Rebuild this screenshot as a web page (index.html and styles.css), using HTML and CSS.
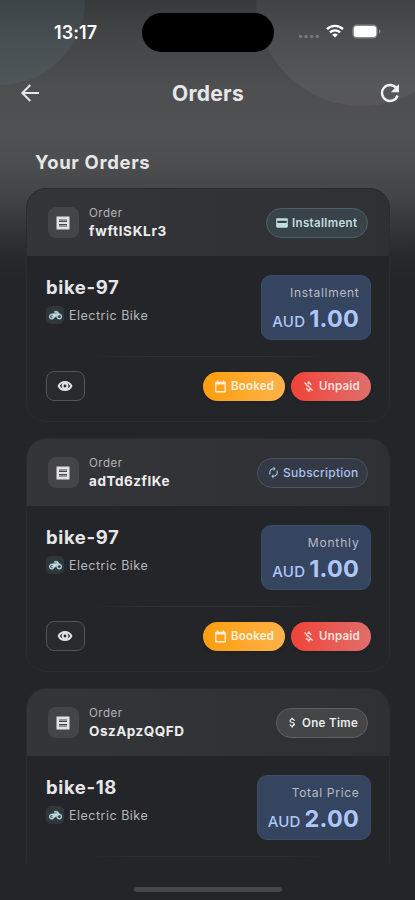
FILE: index.html
```html
<!DOCTYPE html>
<html lang="en">
<head>
<meta charset="utf-8">
<title>Orders</title>
<link rel="stylesheet" href="styles.css">
</head>
<body>
<svg width="0" height="0" class="defs" aria-hidden="true">
  <symbol id="receipt" viewBox="0 0 14 14"><path fill="currentColor" fill-rule="evenodd" d="M.5.5h13v13H.5zM3 3v3h8V3zM3 8v3h8V8z"/><path fill="currentColor" opacity=".5" d="M3 3h8v2H3zM3 9h8v2H3z"/></symbol>
  <symbol id="bike" viewBox="0 0 24 24"><path fill="currentColor" stroke="currentColor" stroke-width=".8" d="M19.440 9.030 15.410 4H10v2.500h4.200l1.500 1.800H9L5 9c-2.800 0-5 2.200-5 5s2.200 5 5 5c2.460 0 4.450-1.690 4.900-4h1.650l2.770-2.770c-.210.540-.320 1.140-.320 1.770 0 2.800 2.200 5 5 5s5-2.200 5-5c0-2.650-1.970-4.770-4.560-4.970M7.820 15C7.400 16.150 6.280 17 5 17c-1.630 0-3-1.370-3-3s1.370-3 3-3c1.280 0 2.400.850 2.820 2H5v2zM19 17c-1.660 0-3-1.340-3-3s1.340-3 3-3 3 1.340 3 3-1.340 3-3 3"/></symbol>
  <symbol id="eye" viewBox="0 0 24 24"><path fill="none" stroke="currentColor" stroke-width="3" d="M2.500 12C4.500 7.800 8 6 12 6s7.500 1.800 9.500 6c-2 4.200-5.500 6-9.500 6S4.500 16.200 2.500 12z"/><circle cx="12" cy="12" r="3.600" fill="none" stroke="currentColor" stroke-width="3"/></symbol>
  <symbol id="calendar" viewBox="0 0 24 24"><path fill="currentColor" d="M20 3h-1V1h-3v2H8V1H5v2H4c-1.100 0-2 .900-2 2v16c0 1.100.900 2 2 2h16c1.100 0 2-.900 2-2V5c0-1.100-.900-2-2-2m-.500 17.500h-15V8.500h15z"/></symbol>
  <symbol id="moneyoff" viewBox="0 0 24 24"><path fill="currentColor" stroke="currentColor" stroke-width=".7" d="M12.500 6.900c1.780 0 2.440.850 2.500 2.100h2.210c-.070-1.720-1.120-3.300-3.210-3.810V3h-3v2.160c-.530.120-1.030.300-1.480.540l1.470 1.470c.410-.170.910-.270 1.510-.270M5.330 4.060 4.060 5.330 7.500 8.770c0 2.080 1.560 3.210 3.910 3.910l3.510 3.510c-.340.480-1.050.910-2.420.910-2.060 0-2.870-.920-2.980-2.100h-2.200c.120 2.190 1.760 3.420 3.680 3.830V21h3v-2.150c.960-.180 1.820-.550 2.450-1.120l2.220 2.220 1.270-1.270z"/></symbol>
  <symbol id="card" viewBox="0 0 24 24"><path fill="currentColor" d="M20 4H4c-1.110 0-2 .890-2 2v12c0 1.110.890 2 2 2h16c1.110 0 2-.890 2-2V6c0-1.110-.890-2-2-2m0 8H4V8h16z"/></symbol>
  <symbol id="renew" viewBox="0 0 24 24"><path fill="currentColor" d="M12 6v3l4-4-4-4v3c-4.420 0-8 3.580-8 8 0 1.570.460 3.030 1.240 4.260L6.700 14.800c-.450-.830-.700-1.790-.700-2.800 0-3.310 2.690-6 6-6m6.760 1.740L17.300 9.200c.440.840.700 1.790.700 2.800 0 3.310-2.690 6-6 6v-3l-4 4 4 4v-3c4.420 0 8-3.580 8-8 0-1.570-.460-3.030-1.240-4.260"/></symbol>
  <symbol id="dollar" viewBox="0 0 24 24"><path fill="currentColor" d="M11.800 10.900c-2.270-.590-3-1.200-3-2.150 0-1.090 1.010-1.850 2.700-1.850 1.780 0 2.440.850 2.500 2.100h2.210c-.070-1.720-1.120-3.300-3.210-3.810V3h-3v2.160c-1.940.420-3.500 1.680-3.500 3.610 0 2.310 1.910 3.460 4.700 4.130 2.500.600 3 1.480 3 2.410 0 .690-.490 1.790-2.700 1.790-2.060 0-2.870-.920-2.980-2.100h-2.200c.120 2.190 1.760 3.420 3.680 3.830V21h3v-2.150c1.950-.370 3.500-1.500 3.500-3.550 0-2.840-2.430-3.810-4.700-4.400"/></symbol>
</svg>
<div class="screen">
  <div class="blob blob-left"></div>
  <div class="blob blob-right"></div>
  <div class="status">
    <span class="time">13:17</span>
    <span class="island"></span>
    <span class="signals">
      <svg width="22" height="5" viewBox="0 0 22 5" fill="#77787a"><circle cx="2.500" cy="2.500" r="1.800"/><circle cx="8.100" cy="2.500" r="1.800"/><circle cx="13.700" cy="2.500" r="1.800"/><circle cx="19.300" cy="2.500" r="1.800"/></svg>
      <svg class="wifi" width="18" height="14" viewBox="0 0 18 14"><g fill="none" stroke="#fff" stroke-width="2.400"><path d="M1 5.200a11.400 11.400 0 0 1 16 0"/><path d="M4 8.400a7.100 7.100 0 0 1 10 0"/></g><path fill="#fff" d="M9 13.600 6.200 10.800a4 4 0 0 1 5.600 0z"/></svg>
      <svg class="battery" width="29" height="15" viewBox="0 0 29 15"><rect x=".5" y=".5" width="25" height="14" rx="4.500" fill="#858688"/><rect x="1.800" y="2" width="22.500" height="11" rx="3.200" fill="#fff"/><path d="M27 5.200c2 .6 2 4 0 4.600z" fill="#858688"/></svg>
    </span>
  </div>
  <header class="bar">
    <svg width="20" height="20" viewBox="0 0 20 20" fill="none" stroke="#e6e6e8" stroke-width="2"><path d="M19 10H2.500M10.300 2 2.300 10l8 8"/></svg>
    <h1>Orders</h1>
    <svg width="20" height="20" viewBox="0 0 20 20"><path d="M16.300 5A8 8 0 1 0 17.600 12.500" fill="none" stroke="#f0f0f2" stroke-width="2.400"/><path d="M19 1v8.200h-8.200z" fill="#f0f0f2"/></svg>
  </header>
  <main class="list">
    <h2>Your Orders</h2>
    <article class="order">
      <div class="head">
        <span class="thumb"><svg width="14" height="14"><use href="#receipt"/></svg></span>
        <div class="ident"><span class="label">Order</span><strong class="code c1">fwftlSKLr3</strong></div>
        <span class="tag teal"><svg width="14" height="14"><use href="#card"/></svg><span>Installment</span></span>
      </div>
      <div class="body">
        <div class="info">
          <div class="item"><h3>bike-97</h3><p class="kind"><span class="chip"><svg width="13" height="13"><use href="#bike"/></svg></span>Electric Bike</p></div>
          <div class="price"><span class="plan">Installment</span><span class="sum"><small>AUD</small><b>1.00</b></span></div>
        </div>
        <hr>
        <div class="foot"><span class="view"><svg width="16" height="16"><use href="#eye"/></svg></span><span class="pill booked"><svg width="13" height="13"><use href="#calendar"/></svg>Booked</span><span class="pill unpaid"><svg width="13" height="13"><use href="#moneyoff"/></svg>Unpaid</span></div>
      </div>
    </article>
    <article class="order">
      <div class="head">
        <span class="thumb"><svg width="14" height="14"><use href="#receipt"/></svg></span>
        <div class="ident"><span class="label">Order</span><strong class="code c2">adTd6zflKe</strong></div>
        <span class="tag blue"><svg width="13" height="13"><use href="#renew"/></svg><span>Subscription</span></span>
      </div>
      <div class="body">
        <div class="info">
          <div class="item"><h3>bike-97</h3><p class="kind"><span class="chip"><svg width="13" height="13"><use href="#bike"/></svg></span>Electric Bike</p></div>
          <div class="price"><span class="plan monthly">Monthly</span><span class="sum"><small>AUD</small><b>1.00</b></span></div>
        </div>
        <hr>
        <div class="foot"><span class="view"><svg width="16" height="16"><use href="#eye"/></svg></span><span class="pill booked"><svg width="13" height="13"><use href="#calendar"/></svg>Booked</span><span class="pill unpaid"><svg width="13" height="13"><use href="#moneyoff"/></svg>Unpaid</span></div>
      </div>
    </article>
    <article class="order">
      <div class="head">
        <span class="thumb"><svg width="14" height="14"><use href="#receipt"/></svg></span>
        <div class="ident"><span class="label">Order</span><strong class="code c3">OszApzQQFD</strong></div>
        <span class="tag grey"><svg width="13" height="13"><use href="#dollar"/></svg><span>One Time</span></span>
      </div>
      <div class="body">
        <div class="info">
          <div class="item"><h3>bike-18</h3><p class="kind"><span class="chip"><svg width="13" height="13"><use href="#bike"/></svg></span>Electric Bike</p></div>
          <div class="price wide"><span class="plan">Total Price</span><span class="sum"><small>AUD</small><b>2.00</b></span></div>
        </div>
        <hr>
      </div>
    </article>
  </main>
  <div class="home"><i></i></div>
</div>
</body>
</html>
```
FILE: styles.css
```css
* { box-sizing: border-box; margin: 0; padding: 0; }
body { background: #242528; font-family: Inter, "Liberation Sans", sans-serif; color: #e6e6e8; }
svg { display: block; flex: none; }
.defs { position: absolute; }
.screen {
  position: relative; width: 415px; height: 900px; overflow: hidden;
  display: flex; flex-direction: column;
  background: linear-gradient(#38393b 0, #434446 35px, #4d4e50 85px, #505153 130px, #4c4d4f 165px, #434446 197px, #343538 230px, #28292c 256px, #242528 280px);
}
.blob { position: absolute; border-radius: 50%; }
.blob-left { width: 170px; height: 170px; left: -85px; top: -85px; background: rgba(100, 140, 155, .14); }
.blob-right { width: 212px; height: 212px; left: 256px; top: -106px; background: rgba(255, 255, 255, .05); }
.status { position: relative; height: 64px; flex: none; display: grid; grid-template-columns: 142px 132px 1fr; align-items: center; }
.time { padding-left: 54px; font-size: 18px; font-weight: 600; letter-spacing: .1px; color: #fff; }
.island { height: 39px; border-radius: 20px; background: #000; }
.signals { display: flex; align-items: center; padding-left: 24px; }
.signals > svg:first-child { margin-top: 9px; }
.wifi { margin-left: 6px; margin-top: -2px; }
.battery { margin-left: 8px; margin-top: -1px; }
.bar { position: relative; height: 58px; flex: none; display: flex; align-items: center; justify-content: space-between; padding: 0 15px 0 20px; }
h1 { font-size: 21px; font-weight: 700; letter-spacing: .3px; position: relative; left: -2px; }
.list { position: relative; height: 741px; flex: none; overflow: hidden; padding: 29px 25px 0 26px; }
h2 { height: 22px; line-height: 23px; margin: 0 0 15px 9px; font-size: 18.500px; font-weight: 700; letter-spacing: .65px; }
.order { height: 234px; margin-bottom: 16px; border: 1px solid #2b2c2f; border-radius: 20px; background: #242528; overflow: hidden; }
.head { height: 67px; display: flex; align-items: center; padding: 0 21px; background: linear-gradient(90deg, #343538, #2f3033); }
.thumb { width: 31px; height: 31px; border-radius: 8px; background: #444547; display: grid; place-items: center; color: #e2e2e4; }
.thumb svg { margin-left: -1px; }
.ident { display: flex; flex-direction: column; margin-left: 10px; flex: 1; }
.label { font-size: 11.500px; line-height: 16px; letter-spacing: .5px; color: #b3b3b6; }
.code { font-size: 13.500px; line-height: 20px; font-weight: 700; color: #ededee; }
.c1 { letter-spacing: .7px; }
.c2 { letter-spacing: .55px; }
.c3 { letter-spacing: .5px; }
.tag { height: 30px; display: flex; align-items: center; gap: 3px; padding: 0 9px; border: 1px solid; border-radius: 15px; font-size: 11.500px; font-weight: 600; letter-spacing: .35px; white-space: nowrap; }
.teal { width: 102px; color: #c3dedf; background: #39444a; border-color: #526064; padding-left: 8px; }
.blue { width: 111px; color: #abc0ec; background: #343a45; border-color: #485366; font-weight: 500; font-size: 12px; gap: 3px; letter-spacing: .25px; }
.grey { width: 92px; color: #ececee; background: #444547; border-color: #606164; }
.body { padding: 19px 18px 0 19px; }
.info { display: flex; justify-content: space-between; height: 65px; }
h3 { font-size: 18.500px; line-height: 25px; font-weight: 700; letter-spacing: .6px; }
.kind { display: flex; align-items: center; margin-top: 6px; font-size: 12.500px; letter-spacing: .5px; color: #b7b7ba; }
.chip { width: 18px; height: 18px; margin-right: 5px; display: grid; place-items: center; border-radius: 5px; background: #2f373b; color: #b9dade; }
.price { width: 110px; height: 65px; padding: 8px 11px 0 0; border: 1px solid #3b4d68; border-radius: 10px; background: #35455f; display: flex; flex-direction: column; align-items: flex-end; }
.wide { width: 114px; }
.plan { font-size: 12px; line-height: 17px; letter-spacing: .7px; margin-right: -.5px; color: #b9bcc3; white-space: nowrap; }
.monthly { letter-spacing: .85px; }
.sum { display: flex; align-items: baseline; gap: 4px; line-height: 36px; color: #aec6fa; }
.sum small { font-size: 15px; font-weight: 500; letter-spacing: .2px; }
.sum b { font-size: 23.500px; font-weight: 700; letter-spacing: .2px; }
hr { height: 1px; border: 0; margin: 16px 0 14px; background: linear-gradient(90deg, transparent 12%, #303134 35%, #303134 65%, transparent 88%); }
.foot { display: flex; align-items: center; }
.view { width: 39px; height: 30px; margin-right: auto; display: grid; place-items: center; border: 1px solid #535456; border-radius: 8px; background: #292a2d; color: #e0e0e2; }
.view svg { margin-left: -2px; }
.pill { height: 29px; display: flex; align-items: center; gap: 4px; padding-left: 11px; border-radius: 15px; font-size: 11.500px; font-weight: 600; letter-spacing: .2px; color: #fff1df; }
.booked { width: 82px; margin-right: 6px; background: linear-gradient(90deg, #ff9d0d, #ffb34b); box-shadow: 0 1px 3px #0003; }
.unpaid { width: 80px; background: linear-gradient(90deg, #f14339, #df6f6c); color: #ffe0de; box-shadow: 0 1px 3px #0003; }
.home { flex: 1; display: flex; justify-content: center; padding-top: 24px; }
.home i { width: 148px; height: 5px; border-radius: 3px; background: #46474a; }
```
